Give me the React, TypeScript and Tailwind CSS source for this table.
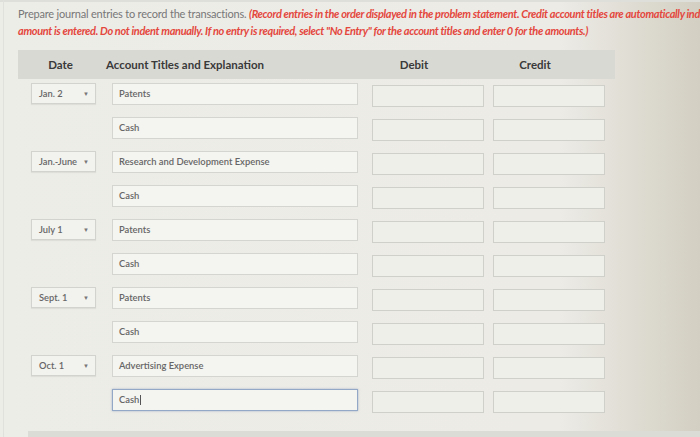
import React from "react";

type Row = { date?: string; account: string; focus?: boolean };

const rows: Row[] = [
  { date: "Jan. 2", account: "Patents" },
  { account: "Cash" },
  { date: "Jan.-June", account: "Research and Development Expense" },
  { account: "Cash" },
  { date: "July 1", account: "Patents" },
  { account: "Cash" },
  { date: "Sept. 1", account: "Patents" },
  { account: "Cash" },
  { date: "Oct. 1", account: "Advertising Expense" },
  { account: "Cash", focus: true },
];

export default function App() {
  return (
    <div
      className="relative h-[437px] w-[700px] overflow-hidden bg-linear-to-r from-[#ededE8] via-[#ecebe6] via-80% to-[#d3cfc2] text-[#666]"
      style={{ fontFamily: "Lato, 'Open Sans', sans-serif" }}
    >
      <div className="border-t-2 border-[#dededa] pl-[18px] pt-[3px]">
        <div className="whitespace-nowrap text-[11px] leading-[17px] tracking-[-0.2px]">
          <span className="text-[#777]">Prepare journal entries to record the transactions. </span>
          <span className="font-bold italic text-[#e4473d] tracking-[-0.35px]">
            (Record entries in the order displayed in the problem statement. Credit account titles are automatically indented when
          </span>
        </div>
        <div className="whitespace-nowrap text-[11px] font-bold italic leading-[17px] tracking-[-0.35px] text-[#e4473d]">
          amount is entered. Do not indent manually. If no entry is required, select "No Entry" for the account titles and enter 0 for the amounts.)
        </div>

        <div className="mt-[11px] flex h-[29px] w-[597px] items-center bg-[#d9d9d4] text-[11.5px] font-bold text-[#3a3a3a]">
          <div className="ml-[10px] w-[65px] text-center">Date</div>
          <div className="ml-[13px] w-[252px]">Account Titles and Explanation</div>
          <div className="w-[112px] text-center">Debit</div>
          <div className="ml-[9px] w-[112px] text-center">Credit</div>
        </div>
      </div>

      <div className="mt-[4px] flex flex-col gap-[12px] pl-[31px]">
        {rows.map((r, i) => (
          <div key={i} className="flex h-[22px] items-start">
            <div className="w-[65px]">
              {r.date && (
                <div className="flex h-[21px] items-center justify-between border border-[#d2d2ce] bg-[#f2f2ee] pl-[7px] pr-[6px] text-[9.3px] font-semibold text-[#666] shadow-[0_1px_1px_rgba(0,0,0,0.06)]">
                  <span>{r.date}</span>
                  <span className="text-[6px] text-[#777]">▼</span>
                </div>
              )}
            </div>
            <div
              className={
                "ml-[16px] flex h-[22px] w-[246px] items-center pl-[6px] text-[9.4px] font-semibold text-[#666] " +
                (r.focus
                  ? "border border-[#93a7c6] bg-[#f4f4f1] shadow-[0_0_2px_rgba(90,120,170,0.5)]"
                  : "border border-[#d4d4d0] bg-[#f4f4f0]")
              }
            >
              <span>{r.account}</span>
              {r.focus && <span className="ml-[1px] inline-block h-[10px] w-px bg-[#555]" />}
            </div>
            <div className="ml-[14px] mt-[2px] h-[22px] w-[112px] border border-[#d0d0cb] bg-[#efefea]" />
            <div className="ml-[9px] mt-[2px] h-[22px] w-[112px] border border-[#d0d0cb] bg-[#efefea]" />
          </div>
        ))}
      </div>

      <div className="absolute bottom-0 left-[28px] h-[6px] w-[680px] bg-[#dcdcd7]" />
      <div className="absolute left-[3px] top-0 h-full w-px bg-[#e0e0dc]" />
    </div>
  );
}
